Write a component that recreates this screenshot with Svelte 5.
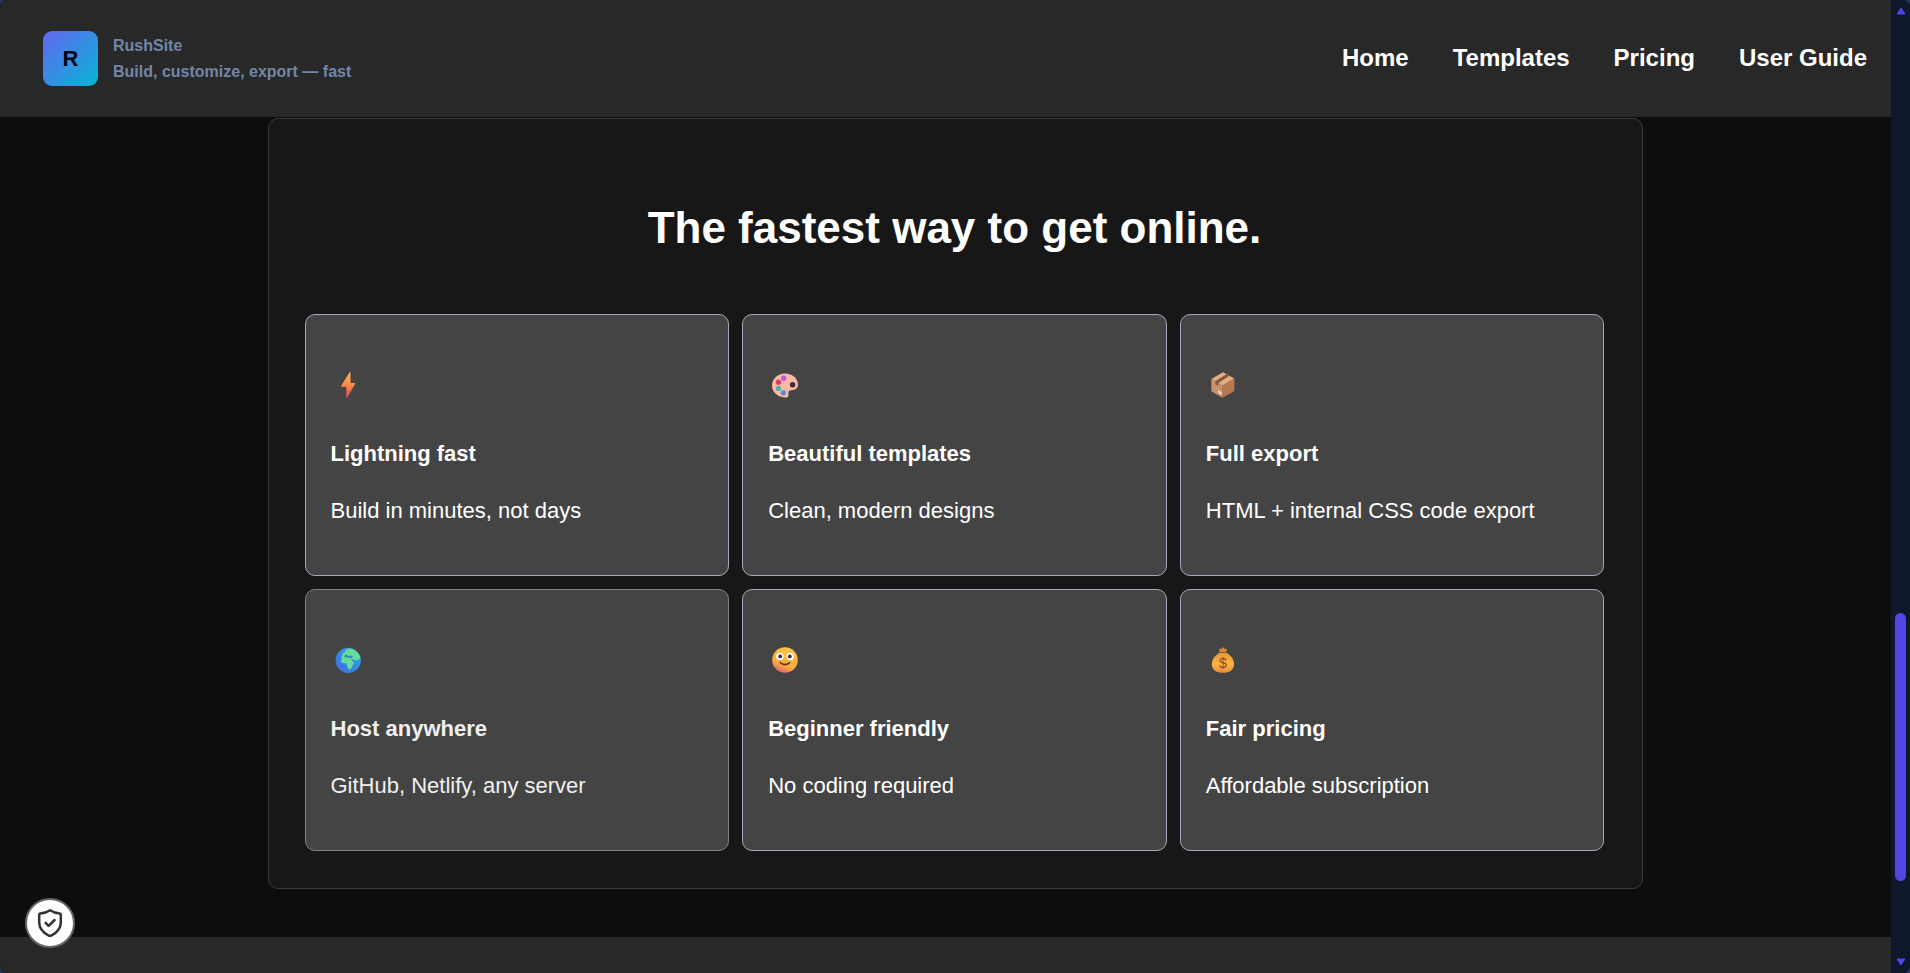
<script>
const links = ['Home', 'Templates', 'Pricing', 'User Guide'];

const features = [
  { icon: 'bolt', title: 'Lightning fast', text: 'Build in minutes, not days' },
  { icon: 'palette', title: 'Beautiful templates', text: 'Clean, modern designs' },
  { icon: 'box', title: 'Full export', text: 'HTML + internal CSS code export' },
  { icon: 'globe', title: 'Host anywhere', text: 'GitHub, Netlify, any server', entering: true },
  { icon: 'smile', title: 'Beginner friendly', text: 'No coding required' },
  { icon: 'money', title: 'Fair pricing', text: 'Affordable subscription' }
];

// share of the scroll track above, under and below the thumb
const scroll = { before: 594, thumb: 270, after: 70 };
</script>

<div class="page">
  <header>
    <div class="brand">
      <div class="logo">R</div>
      <div class="brand-text">
        <div>RushSite</div>
        <div>Build, customize, export — fast</div>
      </div>
    </div>
    <nav>
      {#each links as link}
        <a href="#top">{link}</a>
      {/each}
    </nav>
  </header>

  <main>
    <section class="panel">
      <h1>The fastest way to get online.</h1>
      <div class="grid">
        {#each features as f}
          <article class="card" class:entering={f.entering}>
            <div class="icon">
              <svg viewBox="0 0 26 26" width="26" height="26" aria-hidden="true">
                {#if f.icon === 'bolt'}
                  <path d="M14.6 0.2Q15.6 -0.2 15.5 1V11H19.6Q20.6 11.1 20.1 12L12.3 25.6Q11.2 26.4 11.3 25V14.8H6.7Q5.7 14.6 6.2 13.7Z" fill="url(#boltFill)"/>
                {:else if f.icon === 'palette'}
                  <path d="M13 1.6C20.5 1.6 26 6.8 26 12.5C26 16.6 23 18 19.5 18.2C17 18.4 16 19.6 16.4 21.4C17 24 16 25.6 13.5 25.6C6 25.6 0 20 0 13.5C0 6.8 6 1.6 13 1.6Z" fill="#fbb8a4"/>
                  <circle cx="20.6" cy="12.8" r="2.7" fill="#3d2b38"/>
                  <circle cx="11.7" cy="6.2" r="2.6" fill="#b65ae0"/>
                  <circle cx="6.5" cy="10.2" r="2.6" fill="#e8336f"/>
                  <circle cx="6.5" cy="16.4" r="2.6" fill="#4fb3a8"/>
                  <circle cx="11.3" cy="20.8" r="2.6" fill="#4a8fdc"/>
                {:else if f.icon === 'box'}
                  <path d="M13 0.3L24.4 6.5L12.7 13.5L1.3 7Z" fill="#e2ae80"/>
                  <path d="M1.3 7L12.7 13.5V25.7L1.3 19.3Z" fill="#cb9266"/>
                  <path d="M24.4 6.5L12.7 13.5V25.7L24.4 18.9Z" fill="#b9784d"/>
                  <path d="M5.4 9.3L16.4 2.2L19.2 3.7L8.2 10.9V13.8L5.4 12.2Z" fill="#7d5441"/>
                  <path d="M8.2 18.2L11.7 20V23L8.2 21Z" fill="#eed5cd"/>
                {:else if f.icon === 'globe'}
                  <circle cx="13.2" cy="13.4" r="12.6" fill="url(#seaFill)"/>
                  <path d="M7 12.6L6 10.3L7.7 8.2L6.8 6.8L9.3 6.1L10.2 3.7L13.7 1.4Q20.2 1.6 23.9 7.3Q25.4 10 25.6 12.4L23.6 11.5L22.5 14.1L20.5 12.4L18.9 13.6L17.6 11.8L15.9 11.6L17.7 14.8L19.4 15L17.6 17.7L17.2 20.1L14.6 22.8L13.3 22.2L12 18.3L11.7 16.3L8 16.3L5.6 14.3Z" fill="#67dc9a"/>
                  <path d="M8.6 9.4L11.4 7.3L13 9L15.6 8.6L17.8 9.2L17 11L13.6 10.9L11.2 10.2Z" fill="#358bb9"/>
                {:else if f.icon === 'smile'}
                  <circle cx="13" cy="13" r="12.8" fill="url(#faceFill)"/>
                  <circle cx="7.8" cy="9.4" r="3.7" fill="#fff"/>
                  <circle cx="18.2" cy="9.4" r="3.7" fill="#fff"/>
                  <circle cx="8.2" cy="9.4" r="1.9" fill="#402c32"/>
                  <circle cx="17.8" cy="9.4" r="1.9" fill="#402c32"/>
                  <path d="M8.2 15.6Q13 19.6 17.8 15.6" fill="none" stroke="#67362b" stroke-width="1.5" stroke-linecap="round"/>
                {:else}
                  <path d="M10 5.6L9.2 3Q8.9 1.6 10.3 1.8L11.4 2.1L12.4 0.6Q13 0 13.6 0.6L14.7 2.1L15.8 1.8Q17.2 1.6 16.9 3L16 5.6Z" fill="#d88735"/>
                  <path d="M9.8 5.6H16.2C20.6 8.2 24 12.2 24 16.9C24 22.8 19.6 25.8 13 25.8S1.9 22.8 1.9 16.9C1.9 12.2 5.4 8.2 9.8 5.6Z" fill="url(#bagFill)"/>
                  <path d="M10 5.5H16" stroke="#8d5434" stroke-width="1.2" stroke-linecap="round"/>
                  <text x="13" y="21">$</text>
                {/if}
              </svg>
            </div>
            <h3>{f.title}</h3>
            <p>{f.text}</p>
          </article>
        {/each}
      </div>
    </section>
  </main>

  <footer></footer>

  <div class="scrollbar">
    <svg viewBox="0 0 10 8" width="10" height="8" aria-hidden="true"><path d="M5 1L9 7H1Z"/></svg>
    <div style="flex-grow: {scroll.before}"></div>
    <div class="thumb" style="flex-grow: {scroll.thumb}"></div>
    <div style="flex-grow: {scroll.after}"></div>
    <svg viewBox="0 0 10 8" width="10" height="8" aria-hidden="true"><path d="M5 7L9 1H1Z"/></svg>
  </div>

  <button class="privacy" aria-label="Privacy settings">
    <svg viewBox="0 0 26 30" width="26" height="30" aria-hidden="true">
      <path d="M13 2.2C9.8 4.4 6.5 5.3 3.2 5.5Q2.2 5.7 2.2 6.8V14.5C2.2 20.5 6.5 24.8 11.4 27.4Q13 28.2 14.6 27.4C19.5 24.8 23.8 20.5 23.8 14.5V6.8Q23.8 5.7 22.8 5.5C19.5 5.3 16.2 4.4 13 2.2Z"/>
      <path d="M8.6 14.8L11.6 17.8L17.6 12"/>
    </svg>
  </button>
</div>

<!-- shared emoji gradients -->
<svg class="defs" width="0" height="0" aria-hidden="true">
  <defs>
    <linearGradient id="boltFill" x1="0" y1="0" x2="0" y2="1">
      <stop offset="0" stop-color="#f9b25c"/>
      <stop offset="0.5" stop-color="#ff8a4a"/>
      <stop offset="1" stop-color="#dc4a62"/>
    </linearGradient>
    <linearGradient id="seaFill" x1="1" y1="0" x2="0" y2="1">
      <stop offset="0" stop-color="#3aa5d6"/>
      <stop offset="0.6" stop-color="#3385e6"/>
      <stop offset="1" stop-color="#4b66d6"/>
    </linearGradient>
    <linearGradient id="faceFill" x1="0.8" y1="0" x2="0.4" y2="1">
      <stop offset="0" stop-color="#ffca48"/>
      <stop offset="0.75" stop-color="#fba63e"/>
      <stop offset="1" stop-color="#e2667a"/>
    </linearGradient>
    <linearGradient id="bagFill" x1="0" y1="0" x2="0" y2="1">
      <stop offset="0" stop-color="#e39a38"/>
      <stop offset="0.6" stop-color="#fbb23f"/>
      <stop offset="1" stop-color="#e8893c"/>
    </linearGradient>
  </defs>
</svg>

<style>
:global(body) {
  margin: 0;
  background: #25345c;
  font-family: "Liberation Sans", Arial, sans-serif;
}

.page {
  position: relative;
  display: flex;
  flex-direction: column;
  min-height: 100vh;
  border-radius: 8px;
  overflow: hidden;
  background: #0d0d0d;
  color: #fff;
}

header {
  display: flex;
  justify-content: space-between;
  align-items: center;
  height: 117px;
  padding: 0 43px;
  background: #282828;
}

.brand {
  display: flex;
  align-items: center;
  gap: 15px;
}

.logo {
  display: flex;
  justify-content: center;
  align-items: center;
  width: 55px;
  height: 55px;
  border-radius: 9px;
  background: linear-gradient(135deg, #6366f1, #06b6d4);
  color: #020617;
  font-size: 22px;
  font-weight: bold;
}

.brand-text {
  color: #7186a8;
  font-size: 16px;
  font-weight: bold;
  line-height: 26px;
}

nav {
  display: flex;
  gap: 44px;
}

a {
  padding-bottom: 2px;
  color: #fff;
  font-size: 24px;
  font-weight: bold;
  text-decoration: none;
}

main {
  padding: 1px 43px 48px;
}

.panel {
  box-sizing: border-box;
  max-width: 1375px;
  margin: 0 auto;
  padding: 36px 37px 37px 36px;
  border: 1px solid #3a3a3a;
  border-radius: 10px;
  background: #171717;
}

h1 {
  margin: 38px 0 51px;
  font-size: 44px;
  line-height: 70px;
  text-align: center;
}

.grid {
  display: grid;
  grid-template-columns: repeat(3, 1fr);
  gap: 13px;
}

.card {
  padding: 25px;
  border: 1px solid #a0aabb;
  border-radius: 10px;
  background: #444;
}

.entering {
  border-color: #7d838e;
  color: #f0f0f0;
}

.icon {
  display: flex;
  align-items: center;
  height: 46px;
  margin: 22px 0 28px;
  padding-left: 4px;
}

.icon text {
  fill: #854a2c;
  font-size: 14px;
  text-anchor: middle;
}

h3,
p {
  margin: 0 0 22px;
  font-size: 22px;
  line-height: 35px;
}

footer {
  flex: 1;
  min-height: 36px;
  background: #282828;
}

.scrollbar {
  position: absolute;
  top: 0;
  right: 0;
  bottom: 0;
  display: flex;
  flex-direction: column;
  align-items: center;
  gap: 4px;
  box-sizing: border-box;
  width: 19px;
  padding: 7px 0;
  background: #0f172a;
}

.scrollbar path {
  fill: #4f46e5;
  stroke: #4f46e5;
  stroke-linejoin: round;
}

.thumb {
  width: 11px;
  border-radius: 6px;
  background: #4f46e5;
}

.privacy {
  position: fixed;
  left: 25px;
  bottom: 25px;
  display: flex;
  justify-content: center;
  align-items: center;
  width: 50px;
  height: 50px;
  padding: 0;
  border: 2px solid #666;
  border-radius: 50%;
  background: #fff;
}

.privacy path {
  fill: none;
  stroke: #333;
  stroke-width: 2.5;
  stroke-linecap: round;
  stroke-linejoin: round;
}

.defs {
  position: absolute;
}
</style>
